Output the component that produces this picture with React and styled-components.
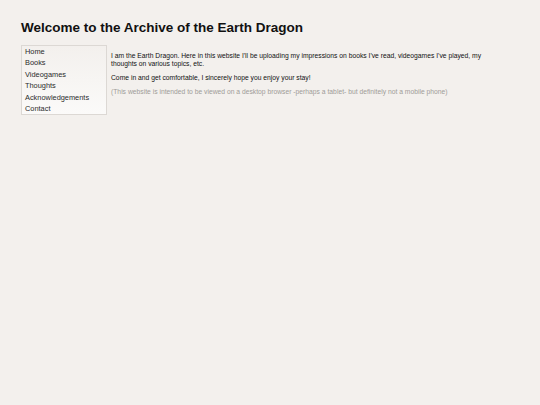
import React from "react";
import styled, { createGlobalStyle } from "styled-components";

const GlobalStyle = createGlobalStyle`
  html, body {
    margin: 0;
    padding: 0;
    background: #f3f0ed;
    font-family: "Liberation Sans", Arial, sans-serif;
  }
`;

const links = [
  "Home",
  "Books",
  "Videogames",
  "Thoughts",
  "Acknowledgements",
  "Contact",
];

function App() {
  return (
    <>
      <GlobalStyle />
      <Page>
        <Title>Welcome to the Archive of the Earth Dragon</Title>
        <Layout>
          <Nav>
            {links.map((l) => (
              <NavLink key={l} href="#">
                {l}
              </NavLink>
            ))}
          </Nav>
          <Main>
            <Text>
              I am the Earth Dragon. Here in this website I'll be uploading my
              impressions on books I've read, videogames I've played, my
              thoughts on various topics, etc.
            </Text>
            <Text>
              Come in and get comfortable, I sincerely hope you enjoy your stay!
            </Text>
            <Text $muted>
              (This website is intended to be viewed on a desktop browser
              -perhaps a tablet- but definitely not a mobile phone)
            </Text>
          </Main>
        </Layout>
      </Page>
    </>
  );
}

const Page = styled.div`
  padding: 19px 21px;
`;

const Title = styled.h1`
  margin: 0 0 8px;
  font-size: 13.5px;
  line-height: 18px;
  font-weight: bold;
  color: #111;
`;

const Layout = styled.div`
  display: flex;
  align-items: flex-start;
  gap: 4px;
`;

const Nav = styled.nav`
  width: 86px;
  display: flex;
  flex-direction: column;
  border: 1px solid #dcd8d4;
  background: linear-gradient(to bottom, #f3f0ed, #fbfaf9);
  padding: 0 0 0 3px;
  box-sizing: border-box;
`;

const NavLink = styled.a`
  font-size: 7.4px;
  line-height: 11.4px;
  color: #2a2a2a;
  text-decoration: none;
`;

const Main = styled.div`
  width: 385px;
  padding-top: 7px;
`;

const Text = styled.p`
  margin: 0 0 6px;
  font-size: 6.75px;
  line-height: 8px;
  color: ${(p) => (p.$muted ? "#a09c98" : "#111")};
`;

export default App;
